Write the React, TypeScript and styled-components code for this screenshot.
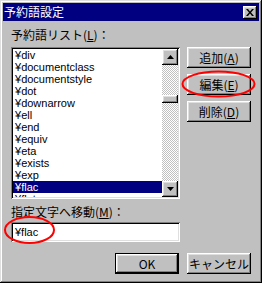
import React from 'react'
import styled, { createGlobalStyle } from 'styled-components'

const GlobalStyle = createGlobalStyle`
  html, body { margin: 0; padding: 0; background: #c0c0c0; }
  body {
    font-family: "Noto Sans CJK JP", "DejaVu Sans", sans-serif;
    font-size: 12px;
    color: #000;
  }
`

const raised = `
  box-shadow: inset -1px -1px #000, inset 1px 1px #fff,
    inset -2px -2px #808080, inset 2px 2px #dfdfdf;
`

const sunken = `
  box-shadow: inset 1px 1px #808080, inset -1px -1px #fff,
    inset 2px 2px #000, inset -2px -2px #dfdfdf;
`

const Window = styled.div`
  position: relative;
  width: 262px;
  height: 283px;
  box-sizing: border-box;
  padding: 3px;
  background: #c0c0c0;
  box-shadow: inset -1px -1px #000, inset 1px 1px #dfdfdf,
    inset -2px -2px #808080, inset 2px 2px #fff;
  display: flex;
  flex-direction: column;
`

const TitleBar = styled.div`
  height: 18px;
  background: #000080;
  color: #fff;
  display: flex;
  align-items: center;
  justify-content: space-between;
  padding: 0 2px 0 1px;
  line-height: 18px;
`

const CloseBtn = styled.div`
  width: 14px;
  height: 13px;
  background: #c0c0c0;
  ${raised}
  display: flex;
  align-items: center;
  justify-content: center;
`

const Content = styled.div`
  display: grid;
  grid-template-columns: 169px 64px;
  column-gap: 7px;
  padding: 6px 8px 0 8px;
`

const LeftCol = styled.div`
  display: flex;
  flex-direction: column;
`

const RightCol = styled.div`
  display: flex;
  flex-direction: column;
  gap: 6px;
  padding-top: 20px;
`

const Label = styled.div<{ $top?: number }>`
  height: 16px;
  line-height: 16px;
  margin-top: ${p => p.$top ?? 0}px;
  white-space: nowrap;
`

const Key = styled.span`
  text-decoration: underline;
`

const ListBox = styled.div`
  margin-top: 4px;
  height: 152px;
  box-sizing: border-box;
  padding: 2px;
  background: #fff;
  ${sunken}
  display: flex;
`

const Items = styled.div`
  flex: 1;
  overflow: hidden;
`

const Item = styled.div<{ $selected?: boolean }>`
  height: 12px;
  line-height: 12px;
  font-family: "Liberation Sans", "Noto Sans CJK JP", sans-serif;
  font-size: 11px;
  padding-left: 2px;
  white-space: nowrap;
  background: ${p => (p.$selected ? '#000080' : 'transparent')};
  color: ${p => (p.$selected ? '#fff' : '#000')};
`

const ScrollBar = styled.div`
  width: 16px;
  display: flex;
  flex-direction: column;
  background: repeating-conic-gradient(#c0c0c0 0 25%, #fff 0 50%) 0 0 / 2px 2px;
`

const Track = styled.div`
  flex: 1;
  padding-top: 30px;
`

const Thumb = styled.div`
  height: 8px;
  background: #c0c0c0;
  ${raised}
`

const ArrowBtn = styled.div`
  width: 16px;
  height: 16px;
  background: #c0c0c0;
  ${raised}
  display: flex;
  align-items: center;
  justify-content: center;
`

const EditBox = styled.div`
  margin-top: 2px;
  height: 20px;
  box-sizing: border-box;
  padding: 2px 4px;
  line-height: 16px;
  font-family: "Liberation Sans", "Noto Sans CJK JP", sans-serif;
  font-size: 11px;
  background: #fff;
  ${sunken}
`

const Button = styled.div<{ $default?: boolean }>`
  width: 64px;
  height: 21px;
  box-sizing: border-box;
  background: #c0c0c0;
  display: flex;
  align-items: center;
  justify-content: center;
  line-height: 14px;
  white-space: nowrap;
  ${p =>
    p.$default
      ? `box-shadow: inset 0 0 0 1px #000, inset -2px -2px #000, inset 2px 2px #fff,
          inset -3px -3px #808080, inset 3px 3px #dfdfdf;`
      : raised}
`

const BottomRow = styled.div`
  grid-column: 1 / -1;
  display: flex;
  justify-content: flex-end;
  gap: 8px;
  margin-top: 11px;
`

const Marks = styled.svg`
  position: absolute;
  left: 0;
  top: 0;
  pointer-events: none;
`

const words = [
  'div', 'documentclass', 'documentstyle', 'dot', 'downarrow', 'ell',
  'end', 'equiv', 'eta', 'exists', 'exp', 'flac', 'flat',
]

const Triangle = ({ down }: { down?: boolean }) => (
  <svg width="7" height="4" viewBox="0 0 7 4">
    <path d={down ? 'M0 0h7L3.5 4z' : 'M3.5 0L7 4H0z'} fill="#000" />
  </svg>
)

export default function App() {
  return (
    <>
      <GlobalStyle />
      <Window>
        <TitleBar>
          <span>予約語設定</span>
          <CloseBtn>
            <svg width="8" height="7" viewBox="0 0 8 7">
              <path d="M0 0h2l2 2.5L6 0h2L5 3.5 8 7H6L4 4.5 2 7H0l3-3.5z" fill="#000" />
            </svg>
          </CloseBtn>
        </TitleBar>
        <Content>
          <LeftCol>
            <Label>予約語リスト(<Key>L</Key>)：</Label>
            <ListBox>
              <Items>
                {words.map(w => (
                  <Item key={w} $selected={w === 'flac'}>¥{w}</Item>
                ))}
              </Items>
              <ScrollBar>
                <ArrowBtn><Triangle /></ArrowBtn>
                <Track><Thumb /></Track>
                <ArrowBtn><Triangle down /></ArrowBtn>
              </ScrollBar>
            </ListBox>
            <Label $top={5}>指定文字へ移動(<Key>M</Key>)：</Label>
            <EditBox>¥flac</EditBox>
          </LeftCol>
          <RightCol>
            <Button>追加(<Key>A</Key>)</Button>
            <Button>編集(<Key>E</Key>)</Button>
            <Button>削除(<Key>D</Key>)</Button>
          </RightCol>
          <BottomRow>
            <Button $default>OK</Button>
            <Button>キャンセル</Button>
          </BottomRow>
        </Content>
        <Marks width="262" height="283" viewBox="0 0 262 283">
          <ellipse cx="218.5" cy="84" rx="36" ry="12.5" fill="none" stroke="#f00" strokeWidth="2" />
          <ellipse cx="29.5" cy="230" rx="24.5" ry="13" fill="none" stroke="#f00" strokeWidth="2" />
        </Marks>
      </Window>
    </>
  )
}
